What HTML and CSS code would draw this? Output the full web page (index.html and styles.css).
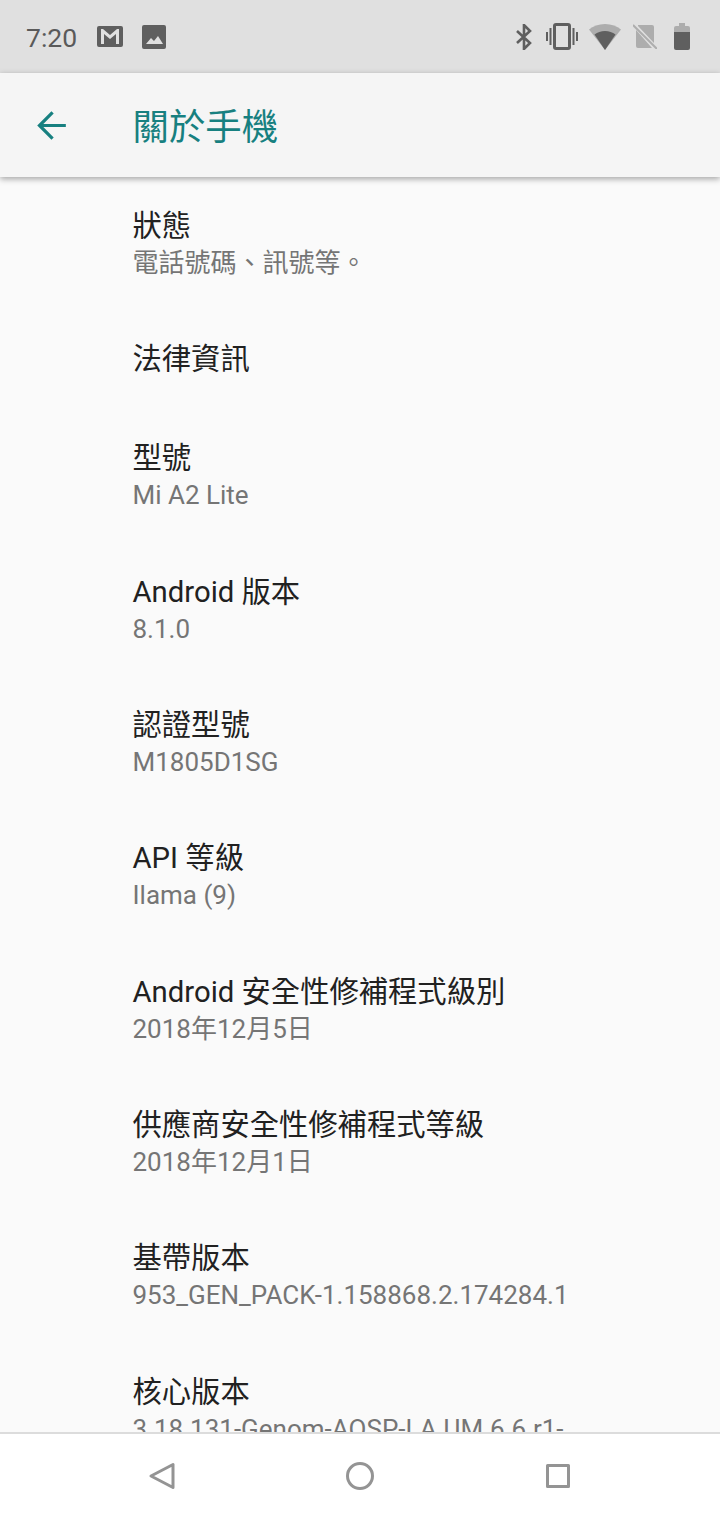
FILE: index.html
```html
<!DOCTYPE html>
<html lang="zh-Hant">
<head>
	<meta charset="UTF-8">
	<title>關於手機</title>
	<link rel="stylesheet" href="styles.css">
</head>
<body>

	<div class="phone">
		<div class="status-bar">
			<div class="status-left">
				<span class="time">7:20</span>
				<svg class="ic-gmail" viewBox="0 0 26 21"><path fill="#5f5f5f" fill-rule="evenodd" d="M2 0h22a2 2 0 0 1 2 2v17a2 2 0 0 1-2 2H2a2 2 0 0 1-2-2V2a2 2 0 0 1 2-2zM4 3v15h3V8l6 5 6-5v10h3V3h-2l-7 6-7-6z"/></svg>
				<svg class="ic-image" viewBox="0 0 24 24"><path fill="#5f5f5f" fill-rule="evenodd" d="M2 0h20a2 2 0 0 1 2 2v20a2 2 0 0 1-2 2H2a2 2 0 0 1-2-2V2a2 2 0 0 1 2-2zM4 19h17l-5-8-4 5-3-3z"/></svg>
			</div>
			<div class="status-right">
				<svg class="ic-bt" viewBox="0 0 18 26"><path fill="none" stroke="#5f5f5f" stroke-width="2.6" d="M2 7l13 12-6 6V1l6 6L2 19"/></svg>
				<svg class="ic-vib" viewBox="0 0 32 27"><path fill="#5f5f5f" fill-rule="evenodd" d="M10 0h12a3 3 0 0 1 3 3v21a3 3 0 0 1-3 3H10a3 3 0 0 1-3-3V3a3 3 0 0 1 3-3zm0 3v21h12V3zM0 9h2v9H0zM3.500 5h2v17h-2zM26.500 5h2v17h-2zM30 9h2v9h-2z"/></svg>
				<svg class="ic-wifi" viewBox="0 0 32 26"><path fill="#adadad" d="M16 0c6.500 0 12 2.200 16 5.500L16 26 0 5.500C4 2.200 9.500 0 16 0z"/><path fill="#5f5f5f" d="M16 7c4 0 7.500 1.200 10.500 3.500L16 26 5.500 10.500C8.500 8.200 12 7 16 7z"/></svg>
				<svg class="ic-sim" viewBox="0 0 24 25"><path fill="#adadad" d="M5 1h14a2 2 0 0 1 2 2v16L5 2zM3 6l16 18H5a2 2 0 0 1-2-2z"/><path stroke="#adadad" stroke-width="2" d="M0 1l24 24"/></svg>
				<svg class="ic-batt" viewBox="0 0 16 27"><path fill="#adadad" d="M5 0h6v3h3a2 2 0 0 1 2 2v4H0V5a2 2 0 0 1 2-2h3z"/><path fill="#5f5f5f" d="M0 9h16v16a2 2 0 0 1-2 2H2a2 2 0 0 1-2-2z"/></svg>
			</div>
		</div>

		<header class="app-bar">
			<svg class="ic-back" viewBox="0 0 24 24"><path fill="none" stroke="#178080" stroke-width="1.800" d="M20 12H5.500M12.600 4.700L5.300 12l7.300 7.300"/></svg>
			<h1 class="app-title">關於手機</h1>
		</header>

		<main class="settings">
			<div class="row">
				<div class="row-title">狀態</div>
				<div class="row-sub">電話號碼、訊號等。</div>
			</div>
			<div class="row row-single">
				<div class="row-title">法律資訊</div>
			</div>
			<div class="row">
				<div class="row-title">型號</div>
				<div class="row-sub">Mi A2 Lite</div>
			</div>
			<div class="row">
				<div class="row-title">Android 版本</div>
				<div class="row-sub">8.1.0</div>
			</div>
			<div class="row">
				<div class="row-title">認證型號</div>
				<div class="row-sub">M1805D1SG</div>
			</div>
			<div class="row">
				<div class="row-title">API 等級</div>
				<div class="row-sub">Ilama (9)</div>
			</div>
			<div class="row">
				<div class="row-title">Android 安全性修補程式級別</div>
				<div class="row-sub">2018年12月5日</div>
			</div>
			<div class="row">
				<div class="row-title">供應商安全性修補程式等級</div>
				<div class="row-sub">2018年12月1日</div>
			</div>
			<div class="row">
				<div class="row-title">基帶版本</div>
				<div class="row-sub">953_GEN_PACK-1.158868.2.174284.1</div>
			</div>
			<div class="row">
				<div class="row-title">核心版本</div>
				<div class="row-sub">3.18.131-Genom-AOSP-LA.UM.6.6.r1-</div>
			</div>
		</main>

		<nav class="nav-bar">
			<svg class="nav-icon" viewBox="0 0 30 30"><path fill="none" stroke="#949494" stroke-width="3" stroke-linejoin="round" d="M26 3.500v23L4 15z"/></svg>
			<svg class="nav-icon" viewBox="0 0 30 30"><circle cx="15" cy="15" r="12.500" fill="none" stroke="#949494" stroke-width="3"/></svg>
			<svg class="nav-icon" viewBox="0 0 30 30"><rect x="4.500" y="4.500" width="21" height="21" fill="none" stroke="#949494" stroke-width="3" stroke-linejoin="round"/></svg>
		</nav>
	</div>

</body>
</html>
```

FILE: styles.css
```css
body {
	margin: 0;
	font-family: Roboto, "Noto Sans CJK TC", sans-serif;
	background-color: #fafafa;
}
.phone {
	width: 720px;
	height: 1520px;
	display: flex;
	flex-direction: column;
	overflow: hidden;
}

/* status bar */
.status-bar {
	height: 73px;
	flex: none;
	background-color: #e0e0e0;
	display: flex;
	align-items: center;
	justify-content: space-between;
	padding: 0 30px 0 26px;
}
.status-left,
.status-right {
	display: flex;
	align-items: center;
}
.time {
	font-size: 26.5px;
	line-height: 32px;
	padding-top: 2px;
	color: #5a5a5a;
	width: 71px;
}
.ic-gmail {
	width: 26px;
	height: 21px;
	margin-right: 19px;
}
.ic-image {
	width: 24px;
	height: 24px;
}
.ic-bt {
	width: 18px;
	height: 26px;
	margin-right: 13px;
}
.ic-vib {
	width: 32px;
	height: 27px;
	margin-right: 11px;
}
.ic-wifi {
	width: 32px;
	height: 26px;
	margin-right: 12px;
}
.ic-sim {
	width: 24px;
	height: 25px;
	margin-right: 17px;
}
.ic-batt {
	width: 16px;
	height: 27px;
}

/* app bar */
.app-bar {
	height: 104px;
	flex: none;
	background-color: #f5f5f5;
	display: flex;
	align-items: center;
	padding-left: 30px;
	position: relative;
	box-shadow: 0 2px 6px rgba(0, 0, 0, 0.35);
}
.ic-back {
	width: 43px;
	height: 43px;
	margin-right: 60px;
}
.app-title {
	margin: 0 0 3px -0.5px;
	font-size: 36.4px;
	font-weight: 400;
	color: #178080;
}

/* list */
.settings {
	flex: 1;
	min-height: 0;
	overflow: hidden;
	padding-left: 132.5px;
}
.row {
	height: 133.33px;
	box-sizing: border-box;
	padding-top: 31px;
}
.row-single {
	height: 99px;
}
.row-title {
	font-size: 29.3px;
	line-height: 36px;
	color: #212121;
}
.row-sub {
	font-size: 26px;
	line-height: 38px;
	color: #757575;
}

/* nav bar */
.nav-bar {
	height: 88px;
	flex: none;
	box-sizing: border-box;
	background-color: #ffffff;
	border-top: 2px solid #dcdcdc;
	display: flex;
	align-items: center;
	justify-content: space-between;
	padding: 0 147px 3px;
}
.nav-icon {
	width: 30px;
	height: 30px;
}
```
